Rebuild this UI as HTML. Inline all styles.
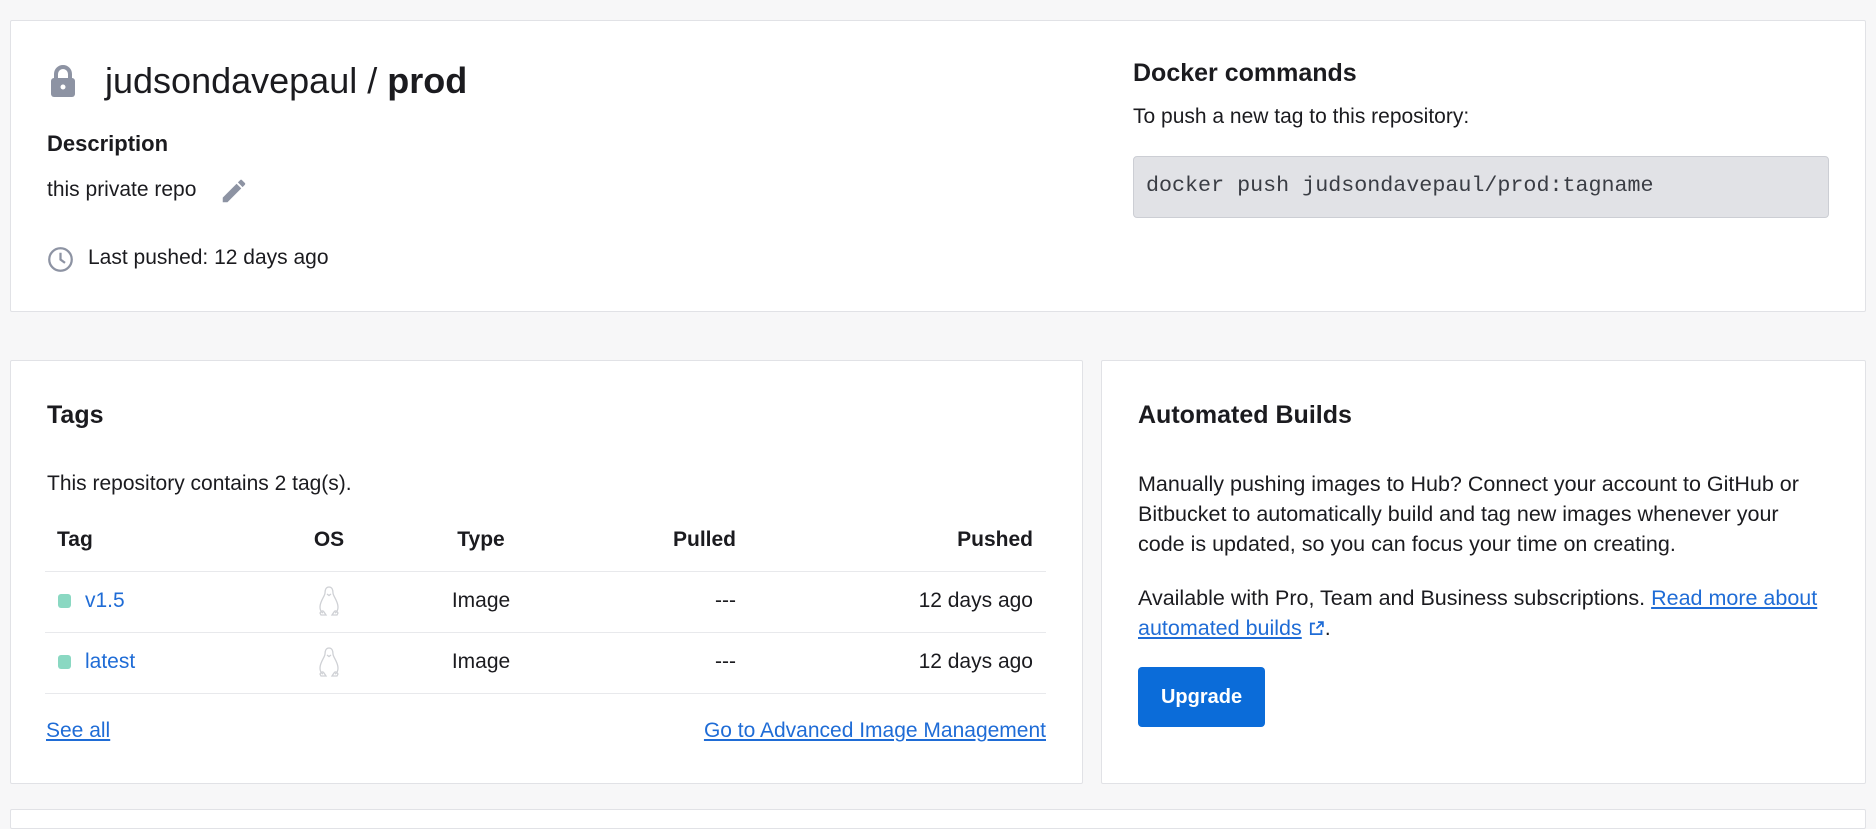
<!DOCTYPE html>
<html><head><meta charset="utf-8"><style>
*{box-sizing:border-box;margin:0;padding:0}
body{width:1876px;height:814px;overflow:hidden;background:#f7f7f8;font-family:"Liberation Sans",sans-serif;color:#1b1b1f;position:relative}
.card{position:absolute;background:#fff;border:1px solid #e1e2e6;border-radius:2px}
.a{position:absolute;white-space:nowrap}
.b{font-size:21px}
.l{color:#1f6cd6}
.u{text-decoration:underline}
.row{position:absolute;left:45px;width:1001px;border-top:1px solid #e8e9ec}
.dot{position:absolute;width:13px;height:14px;border-radius:3px;background:#8ad8c2}
.r{text-align:right}
.c{text-align:center;width:120px}
</style></head><body>
<div class="card" style="left:10px;top:20px;width:1856px;height:292px"></div>
<div class="card" style="left:10px;top:360px;width:1073px;height:424px"></div>
<div class="card" style="left:1101px;top:360px;width:765px;height:424px"></div>
<div class="card" style="left:10px;top:809px;width:1856px;height:20px"></div>

<svg class="a" style="left:48px;top:64px" width="30" height="34" viewBox="0 0 30 34"><path d="M8 14V10a7 7 0 0 1 14 0v4" fill="none" stroke="#8d93a3" stroke-width="4"/><rect x="3" y="14" width="24" height="19" rx="3" fill="#8d93a3"/><circle cx="15" cy="23" r="2.5" fill="#fff"/></svg>
<div class="a" style="left:105px;top:60px;font-size:36px">judsondavepaul / <b>prod</b></div>
<div class="a" style="left:47px;top:131px;font-size:22px;font-weight:bold">Description</div>
<div class="a b" style="left:47px;top:178px">this private repo</div>
<svg class="a" style="left:219px;top:176px" width="30" height="30" viewBox="0 0 24 24"><path d="M3 17.25V21h3.75L17.81 9.94l-3.75-3.75L3 17.25zM20.71 7.04a1 1 0 0 0 0-1.41l-2.34-2.34a1 1 0 0 0-1.41 0l-1.83 1.83 3.75 3.75 1.83-1.83z" fill="#8d93a3"/></svg>
<svg class="a" style="left:47px;top:246px" width="27" height="27" viewBox="0 0 24 24"><circle cx="12" cy="12" r="10" fill="none" stroke="#8d93a3" stroke-width="2"/><path d="M12 6v6l4 3" fill="none" stroke="#8d93a3" stroke-width="2"/></svg>
<div class="a b" style="left:88px;top:246px">Last pushed: 12 days ago</div>

<div class="a" style="left:1133px;top:59px;font-size:25px;font-weight:bold">Docker commands</div>
<div class="a b" style="left:1133px;top:105px">To push a new tag to this repository:</div>
<div class="a" style="left:1133px;top:156px;width:696px;height:62px;background:#e1e2e6;border:1px solid #ccced4;border-radius:4px"></div>
<div class="a" style="left:1146px;top:173px;font-size:21.7px;font-family:'Liberation Mono',monospace;color:#3a3d44">docker push judsondavepaul/prod:tagname</div>

<div class="a" style="left:47px;top:401px;font-size:25px;font-weight:bold">Tags</div>
<div class="a b" style="left:47px;top:472px">This repository contains 2 tag(s).</div>
<div class="a b" style="left:57px;top:528px;font-weight:bold">Tag</div>
<div class="a b c" style="left:269px;top:528px;font-weight:bold">OS</div>
<div class="a b c" style="left:421px;top:528px;font-weight:bold">Type</div>
<div class="a b r" style="right:1140px;top:528px;font-weight:bold">Pulled</div>
<div class="a b r" style="right:843px;top:528px;font-weight:bold">Pushed</div>
<div class="row" style="top:571px"></div><div class="row" style="top:632px"></div><div class="row" style="top:693px"></div>

<div class="dot" style="left:58px;top:594px"></div>
<div class="a b l" style="left:85px;top:589px">v1.5</div>
<div class="dot" style="left:58px;top:655px"></div>
<div class="a b l" style="left:85px;top:650px">latest</div>
<svg class="a" style="left:316px;top:585px" width="26" height="32" viewBox="0 0 26 32"><g fill="none" stroke="#cfd1d5" stroke-width="1.3"><path d="M13 2c-3 0-4 3-4 6 0 3-5 8-5 14 0 3 1 5 3 6M13 2c3 0 4 3 4 6 0 3 5 8 5 14 0 3-1 5-3 6"/><path d="M4 28c1-2 3-3 4-1l2 3H5zM22 28c-1-2-3-3-4-1l-2 3h5z"/><path d="M11 9l2 1.5 2-1.5"/></g></svg>
<svg class="a" style="left:316px;top:646px" width="26" height="32" viewBox="0 0 26 32"><g fill="none" stroke="#cfd1d5" stroke-width="1.3"><path d="M13 2c-3 0-4 3-4 6 0 3-5 8-5 14 0 3 1 5 3 6M13 2c3 0 4 3 4 6 0 3 5 8 5 14 0 3-1 5-3 6"/><path d="M4 28c1-2 3-3 4-1l2 3H5zM22 28c-1-2-3-3-4-1l-2 3h5z"/><path d="M11 9l2 1.5 2-1.5"/></g></svg>
<div class="a b c" style="left:421px;top:589px">Image</div>
<div class="a b c" style="left:421px;top:650px">Image</div>
<div class="a b r" style="right:1140px;top:589px">---</div>
<div class="a b r" style="right:1140px;top:650px">---</div>
<div class="a b r" style="right:843px;top:589px">12 days ago</div>
<div class="a b r" style="right:843px;top:650px">12 days ago</div>
<div class="a b l u" style="left:46px;top:719px">See all</div>
<div class="a b l u r" style="right:830px;top:719px">Go to Advanced Image Management</div>

<div class="a" style="left:1138px;top:401px;font-size:25px;font-weight:bold">Automated Builds</div>
<div class="a" style="left:1138px;top:469px;font-size:21.5px;line-height:30px">Manually pushing images to Hub? Connect your account to GitHub or<br>Bitbucket to automatically build and tag new images whenever your<br>code is updated, so you can focus your time on creating.</div>
<div class="a" style="left:1138px;top:583px;font-size:21.5px;line-height:30px">Available with Pro, Team and Business subscriptions. <span class="l u">Read more about</span><br><span class="l u">automated builds</span> <svg width="17" height="17" viewBox="0 0 24 24" style="vertical-align:-2px"><path d="M14 3h7v7M21 3l-9 9M19 14v6H4V5h6" fill="none" stroke="#1f6cd6" stroke-width="2.5"/></svg>.</div>
<div class="a" style="left:1138px;top:667px;width:127px;height:60px;background:#0b6cd9;border-radius:4px;color:#fff;font-size:20px;font-weight:bold;text-align:center;line-height:60px">Upgrade</div>
</body></html>
